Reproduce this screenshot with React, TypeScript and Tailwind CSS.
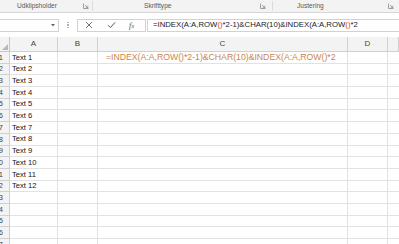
const FONT = "font-['Liberation_Sans',Arial,sans-serif]"

const ROWS = Array.from({ length: 17 }, (_, i) => i + 1)
const COLS = ['A', 'B', 'C', 'D', '']

function Launcher() {
  return (
    <svg width="6" height="6" viewBox="0 0 6 6" className="shrink-0">
      <path d="M0.5 0.5V5.5H5.5" fill="none" stroke="#8a8a8a" strokeWidth="0.8" />
      <path d="M2 2L4.8 4.8M4.8 2.8V4.8H2.8" fill="none" stroke="#8a8a8a" strokeWidth="0.8" />
    </svg>
  )
}

function Ribbon() {
  return (
    <div className={`flex h-[13px] bg-[#f3f3f3] border-b border-[#d6d6d6] text-[6.6px] text-[#5a5a5a] ${FONT}`}>
      <div className="w-[92px] flex items-center">
        <span className="ml-[17px]">Udklipsholder</span>
        <span className="ml-auto mr-[3px]"><Launcher /></span>
      </div>
      <div className="w-px my-[1px] bg-[#dcdcdc]" />
      <div className="w-[179px] flex items-center">
        <span className="ml-[51px]">Skrifttype</span>
        <span className="ml-auto mr-[6px]"><Launcher /></span>
      </div>
      <div className="w-px my-[1px] bg-[#dcdcdc]" />
      <div className="flex-1 flex items-center">
        <span className="ml-[24px]">Justering</span>
        <span className="ml-auto mr-[5px]"><Launcher /></span>
      </div>
    </div>
  )
}

function FormulaBar() {
  return (
    <div className={`flex items-center h-[24px] bg-white ${FONT}`}>
      <div className="w-[59px] h-[13px] border border-l-0 border-[#d2d2d2] flex items-center justify-end pr-[3px]">
        <svg width="4" height="3" viewBox="0 0 4 3">
          <path d="M0 0H4L2 2.5Z" fill="#666" />
        </svg>
      </div>
      <div className="w-[18px] flex flex-col items-center gap-[1px]">
        <span className="w-[1.5px] h-[1.5px] bg-[#b0b0b0]" />
        <span className="w-[1.5px] h-[1.5px] bg-[#b0b0b0]" />
        <span className="w-[1.5px] h-[1.5px] bg-[#b0b0b0]" />
      </div>
      <div className="w-[69px] h-[13px] border border-[#d2d2d2] flex items-center">
        <svg width="8" height="8" viewBox="0 0 8 8" className="ml-[7px]">
          <path d="M1 1L7 7M7 1L1 7" stroke="#666" strokeWidth="0.9" />
        </svg>
        <svg width="9" height="8" viewBox="0 0 9 8" className="ml-[14px]">
          <path d="M1 4.2L3.4 6.6L8 1.4" fill="none" stroke="#555" strokeWidth="1" />
        </svg>
        <span className="ml-[13px] italic font-['Liberation_Serif',serif] text-[8.5px] text-[#555] leading-none">
          f<span className="text-[6px]">x</span>
        </span>
      </div>
      <div className="flex-1 ml-[1px] h-[13px] border border-r-0 border-[#d2d2d2] flex items-center pl-[5px] text-[7.75px] text-[#222] whitespace-nowrap overflow-hidden">
        =INDEX(A:A,ROW<span className="text-[#e0452c]">()</span>*2-1)&amp;CHAR(10)&amp;INDEX(A:A,ROW
        <span className="text-[#e0452c]">()</span>*2
      </div>
    </div>
  )
}

function Grid() {
  return (
    <div
      className={`grid grid-cols-[10px_48px_40px_250px_40px_1fr] grid-rows-[15px_repeat(17,11.7px)] ${FONT} overflow-hidden`}
    >
      <div className="bg-[#f3f3f3] border-r border-b border-[#c8c8c8] relative">
        <svg width="6" height="6" viewBox="0 0 6 6" className="absolute right-[1px] bottom-[1px]">
          <path d="M6 0V6H0Z" fill="#b8b8b8" />
        </svg>
      </div>
      {COLS.map((c, i) => (
        <div
          key={i}
          className="bg-[#f3f3f3] border-r border-b border-[#d0d0d0] flex items-center justify-center text-[8px] text-[#444]"
        >
          {c}
        </div>
      ))}
      {ROWS.map((r) => (
        <Row key={r} n={r} />
      ))}
    </div>
  )
}

function Row({ n }: { n: number }) {
  return (
    <>
      <div className="bg-[#f3f3f3] border-r border-b border-[#d0d0d0] flex items-center justify-end pr-[6px] text-[7.5px] text-[#444] overflow-hidden">
        {n}
      </div>
      <div className="border-r border-b border-[#e2e2e2] flex items-center pl-[2px] text-[7.6px] text-[#111] whitespace-nowrap">
        {n <= 12 ? `Text ${n}` : ''}
      </div>
      <div className="border-r border-b border-[#e2e2e2]" />
      <div className="border-r border-b border-[#e2e2e2] flex items-center pl-[8px] text-[8.7px] text-[#c8874c] whitespace-nowrap">
        {n === 1 ? '=INDEX(A:A,ROW()*2-1)&CHAR(10)&INDEX(A:A,ROW()*2' : ''}
      </div>
      <div className="border-r border-b border-[#e2e2e2]" />
      <div className="border-b border-[#e2e2e2]" />
    </>
  )
}

export default function App() {
  return (
    <div className="w-[399px] h-[244px] overflow-hidden bg-white">
      <Ribbon />
      <FormulaBar />
      <Grid />
    </div>
  )
}
